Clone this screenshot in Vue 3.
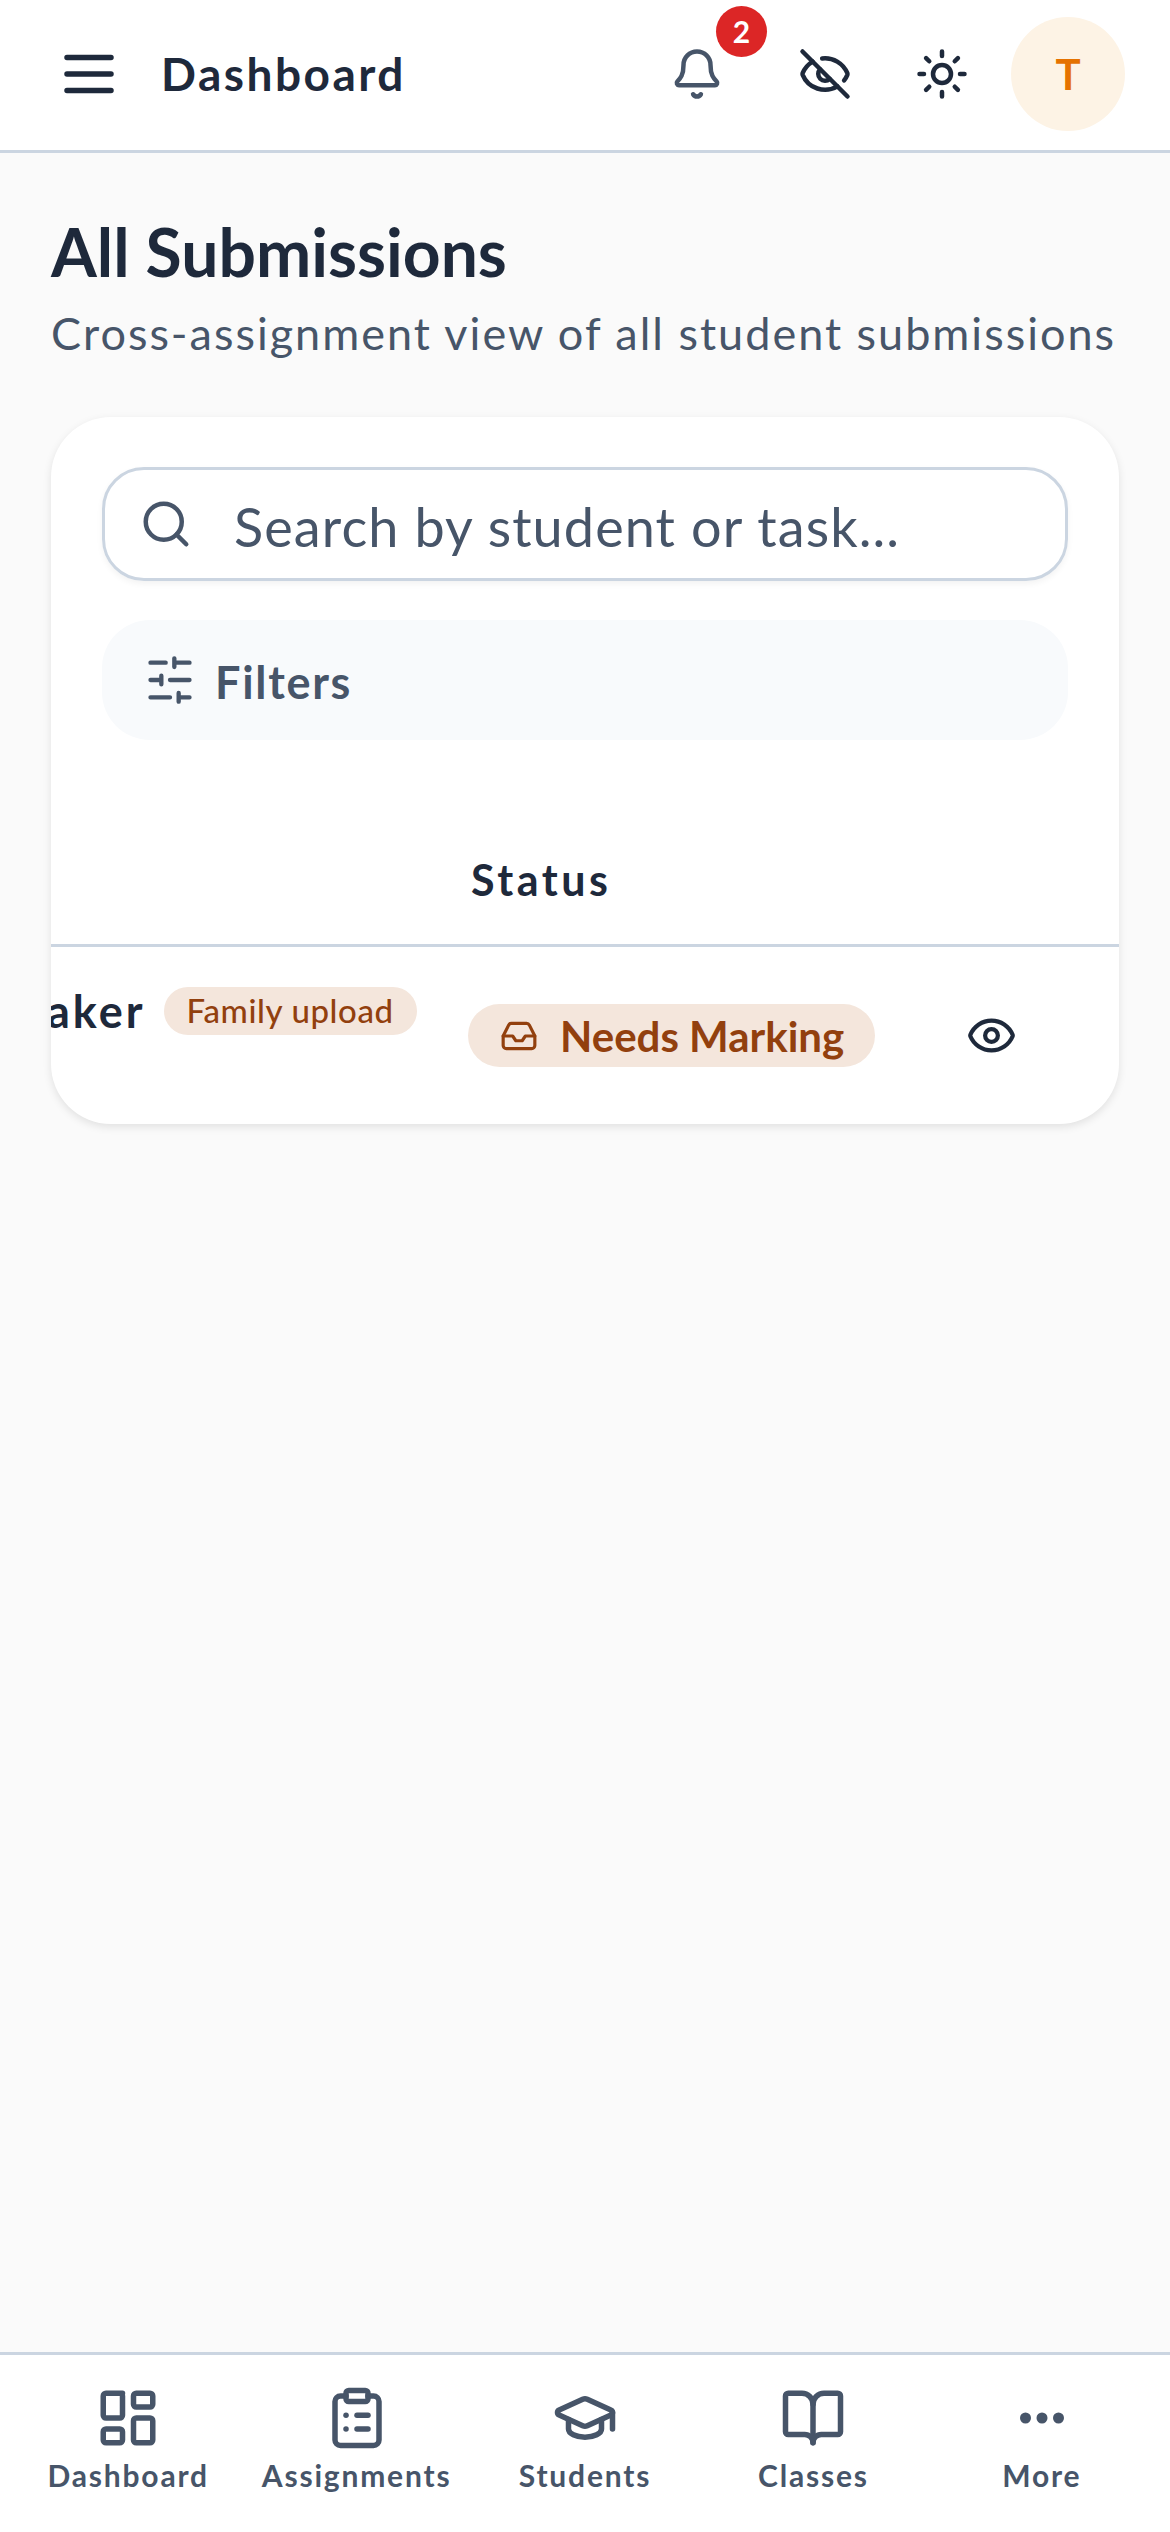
<script setup>
const navItems = [
  { label: 'Dashboard', paths: ['M10 3H4a1 1 0 0 0-1 1v7a1 1 0 0 0 1 1h5a1 1 0 0 0 1-1V4a1 1 0 0 0-1-1z', 'M20 3h-5a1 1 0 0 0-1 1v3a1 1 0 0 0 1 1h5a1 1 0 0 0 1-1V4a1 1 0 0 0-1-1z', 'M20 12h-5a1 1 0 0 0-1 1v7a1 1 0 0 0 1 1h5a1 1 0 0 0 1-1v-7a1 1 0 0 0-1-1z', 'M9 16H4a1 1 0 0 0-1 1v3a1 1 0 0 0 1 1h5a1 1 0 0 0 1-1v-3a1 1 0 0 0-1-1z'] },
  { label: 'Assignments', paths: ['M9 2h6a1 1 0 0 1 1 1v2a1 1 0 0 1-1 1H9a1 1 0 0 1-1-1V3a1 1 0 0 1 1-1z', 'M16 4h2a2 2 0 0 1 2 2v14a2 2 0 0 1-2 2H6a2 2 0 0 1-2-2V6a2 2 0 0 1 2-2h2', 'M12 11h4', 'M12 16h4', 'M8 11h.01', 'M8 16h.01'] },
  { label: 'Students', paths: ['M21.42 10.922a1 1 0 0 0-.019-1.838L12.83 5.18a2 2 0 0 0-1.66 0L2.6 9.08a1 1 0 0 0 0 1.832l8.57 3.908a2 2 0 0 0 1.66 0z', 'M22 10v6', 'M6 12.5V16a6 3 0 0 0 12 0v-3.5'] },
  { label: 'Classes', paths: ['M12 7v14', 'M3 18a1 1 0 0 1-1-1V4a1 1 0 0 1 1-1h5a4 4 0 0 1 4 4 4 4 0 0 1 4-4h5a1 1 0 0 1 1 1v13a1 1 0 0 1-1 1h-6a3 3 0 0 0-3 3 3 3 0 0 0-3-3z'] },
  { label: 'More', paths: ['M12 11a1 1 0 1 0 0 2 1 1 0 1 0 0-2z', 'M18 11a1 1 0 1 0 0 2 1 1 0 1 0 0-2z', 'M6 11a1 1 0 1 0 0 2 1 1 0 1 0 0-2z'] },
]
</script>

<template>
  <div class="page">
    <header class="topbar">
      <svg class="menu-icon" viewBox="0 0 24 24"><path d="M4 6h16M4 12h16M4 18h16" /></svg>
      <span class="topbar-title">Dashboard</span>
      <div class="topbar-actions">
        <div class="bell">
          <svg class="icon slate" viewBox="0 0 24 24">
            <path d="M10.268 21a2 2 0 0 0 3.464 0" />
            <path d="M3.262 15.326A1 1 0 0 0 4 17h16a1 1 0 0 0 .74-1.673C19.41 13.956 18 12.499 18 8A6 6 0 0 0 6 8c0 4.499-1.411 5.956-2.738 7.326" />
          </svg>
          <span class="bell-count">2</span>
        </div>
        <svg class="icon" viewBox="0 0 24 24">
          <path d="M10.733 5.076a10.744 10.744 0 0 1 11.205 6.575 1 1 0 0 1 0 .696 10.747 10.747 0 0 1-1.444 2.49" />
          <path d="M14.084 14.158a3 3 0 0 1-4.242-4.242" />
          <path d="M17.479 17.499a10.75 10.75 0 0 1-15.417-5.151 1 1 0 0 1 0-.696 10.75 10.75 0 0 1 4.446-5.143" />
          <path d="m2 2 20 20" />
        </svg>
        <svg class="icon" viewBox="0 0 24 24">
          <circle cx="12" cy="12" r="4" />
          <path d="M12 2v2M12 20v2M4.93 4.93l1.41 1.41M17.66 17.66l1.41 1.41M2 12h2M20 12h2M6.34 17.66l-1.41 1.41M19.07 4.93l-1.41 1.41" />
        </svg>
        <div class="avatar">T</div>
      </div>
    </header>

    <main class="content">
      <h1>All Submissions</h1>
      <p class="subtitle">Cross-assignment view of all student submissions</p>

      <section class="card">
        <div class="search">
          <svg class="icon slate" viewBox="0 0 24 24">
            <circle cx="11" cy="11" r="8" />
            <path d="m21 21-4.34-4.34" />
          </svg>
          <span>Search by student or task...</span>
        </div>
        <div class="filters">
          <svg viewBox="0 0 24 24">
            <path d="M21 4h-7M10 4H3M21 12h-9M8 12H3M21 20h-5M12 20H3M14 2v4M8 10v4M16 18v4" />
          </svg>
          <span>Filters</span>
        </div>

        <div class="table-head">
          <span class="status-head">Status</span>
        </div>
        <div class="table-row">
          <div class="student">
            <span class="student-name">aker</span>
            <span class="tag">Family upload</span>
          </div>
          <span class="status">
            <svg viewBox="0 0 24 24">
              <path d="M22 12h-6l-2 3h-4l-2-3H2" />
              <path d="M5.45 5.11 2 12v6a2 2 0 0 0 2 2h16a2 2 0 0 0 2-2v-6l-3.45-6.89A2 2 0 0 0 16.76 4H7.24a2 2 0 0 0-1.79 1.11z" />
            </svg>
            Needs Marking
          </span>
          <svg class="row-eye" viewBox="0 0 24 24">
            <path d="M2.062 12.348a1 1 0 0 1 0-.696 10.75 10.75 0 0 1 19.876 0 1 1 0 0 1 0 .696 10.75 10.75 0 0 1-19.876 0" />
            <circle cx="12" cy="12" r="3" />
          </svg>
        </div>
      </section>
    </main>

    <nav class="bottom-nav">
      <div class="nav-item" v-for="item in navItems" :key="item.label">
        <svg viewBox="0 0 24 24"><path v-for="d in item.paths" :key="d" :d="d" /></svg>
        <span>{{ item.label }}</span>
      </div>
    </nav>
  </div>
</template>

<style scoped>
.page {
  width: 1170px;
  height: 2532px;
  display: flex;
  flex-direction: column;
  background: #fafafa;
  color: #1e293b;
  font-family: "Lato", "Noto Sans", sans-serif;
}
svg {
  fill: none;
  stroke: currentColor;
  stroke-linecap: round;
  stroke-linejoin: round;
  stroke-width: 2;
  flex-shrink: 0;
}
.icon {
  width: 54px;
  height: 54px;
}
.slate {
  color: #475569;
}

.topbar {
  height: 153px;
  box-sizing: border-box;
  flex-shrink: 0;
  display: flex;
  align-items: center;
  padding: 0 45px 3px 56px;
  background: #fff;
  border-bottom: 3px solid #cbd5e1;
}
.menu-icon {
  width: 66px;
  height: 66px;
}
.topbar-title {
  margin-left: 39px;
  font-size: 46px;
  font-weight: 700;
  letter-spacing: 2.5px;
}
.topbar-actions {
  margin-left: auto;
  display: flex;
  align-items: center;
  gap: 63px;
}
.bell {
  position: relative;
  display: flex;
  margin-right: 11px;
}
.bell-count {
  position: absolute;
  left: 46px;
  top: -41px;
  width: 51px;
  height: 51px;
  border-radius: 50%;
  background: #dc2626;
  color: #fff;
  font-size: 30px;
  font-weight: 700;
  display: flex;
  align-items: center;
  justify-content: center;
}
.avatar {
  width: 114px;
  height: 114px;
  margin-left: -21px;
  border-radius: 50%;
  background: #fdf3e5;
  color: #e57200;
  font-size: 42px;
  font-weight: 700;
  display: flex;
  align-items: center;
  justify-content: center;
}

.content {
  flex: 1;
  padding: 0 51px;
}
h1 {
  margin: 55px 0 0;
  font-size: 66px;
  line-height: 88px;
  font-weight: 700;
}
.subtitle {
  margin: 7px 0 0;
  font-size: 45px;
  line-height: 60px;
  letter-spacing: 2px;
  color: #475569;
  white-space: nowrap;
}

.card {
  margin-top: 54px;
  height: 707px;
  box-sizing: border-box;
  padding-top: 50px;
  border-radius: 60px;
  background: #fff;
  box-shadow: 0 3px 9px rgba(0, 0, 0, 0.1);
  overflow: hidden;
}
.search {
  height: 114px;
  box-sizing: border-box;
  margin: 0 51px;
  padding: 5px 34px 0;
  display: flex;
  align-items: center;
  gap: 41px;
  border: 3px solid #cbd5e1;
  border-radius: 42px;
  box-shadow: 0 3px 6px rgba(0, 0, 0, 0.05);
  font-size: 54px;
  letter-spacing: 1.1px;
  color: #475569;
}
.search svg {
  margin-top: -5px;
}
.filters {
  height: 120px;
  box-sizing: border-box;
  margin: 39px 51px 0;
  padding: 3px 42px 0;
  display: flex;
  align-items: center;
  gap: 19px;
  border-radius: 48px;
  background: #f8fafc;
  font-size: 45px;
  font-weight: 700;
  letter-spacing: 1.7px;
  color: #475569;
}
.filters svg {
  width: 52px;
  height: 52px;
  margin-top: -3px;
}
.table-head {
  height: 207px;
  box-sizing: border-box;
  padding: 74px 0 0 420px;
  display: flex;
  align-items: center;
  border-bottom: 3px solid #cbd5e1;
  font-size: 43px;
  font-weight: 700;
  letter-spacing: 3.5px;
}
.table-row {
  display: grid;
  grid-template-columns: 417px 407px 1fr;
  align-items: center;
  padding-top: 57px;
}
.student {
  display: flex;
  align-items: center;
  gap: 18px;
  align-self: start;
  margin-top: -20px;
}
.student-name {
  margin-left: -4px;
  font-size: 45px;
  font-weight: 700;
  letter-spacing: 3px;
}
.tag {
  height: 48px;
  padding: 0 23px 3px;
  box-sizing: border-box;
  display: flex;
  align-items: center;
  border-radius: 24px;
  background: #f4e6dc;
  color: #92400e;
  font-size: 33px;
  font-weight: 500;
  letter-spacing: 0.6px;
}
.status {
  height: 63px;
  padding: 0 32px;
  display: flex;
  align-items: center;
  gap: 22px;
  border-radius: 32px;
  background: #f4e6dc;
  color: #92400e;
  font-size: 42px;
  font-weight: 700;
  white-space: nowrap;
}
.status svg {
  width: 38px;
  height: 38px;
}
.row-eye {
  width: 51px;
  height: 51px;
  justify-self: center;
  margin-right: 11px;
}

.bottom-nav {
  height: 180px;
  box-sizing: border-box;
  flex-shrink: 0;
  padding: 30px 14px 0;
  display: grid;
  grid-template-columns: repeat(5, 1fr);
  background: #fff;
  border-top: 3px solid #cbd5e1;
}
.nav-item {
  display: flex;
  flex-direction: column;
  align-items: center;
  color: #475569;
  font-size: 30px;
  font-weight: 700;
  letter-spacing: 1.8px;
}
.nav-item svg {
  width: 66px;
  height: 66px;
}
.nav-item span {
  margin-top: 6px;
}
</style>

<style>
body {
  background: #fafafa;
}
</style>
